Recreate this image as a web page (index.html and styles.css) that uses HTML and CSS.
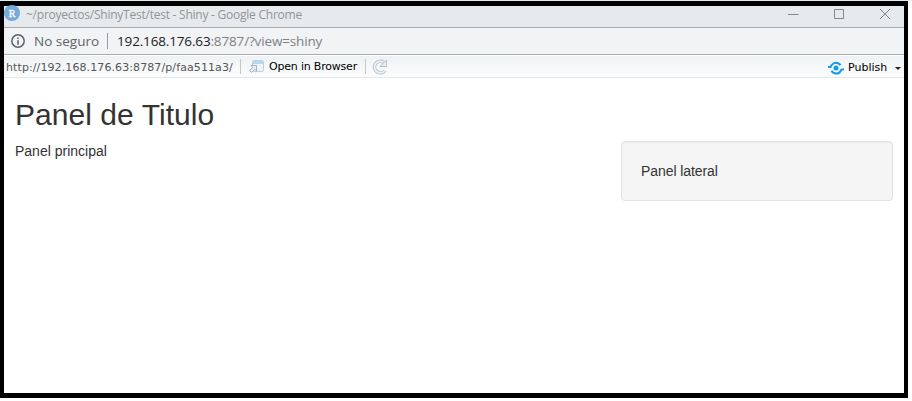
FILE: index.html
```html
<!DOCTYPE html>
<html lang="es">
<head>
<meta charset="utf-8">
<title>~/proyectos/ShinyTest/test - Shiny</title>
<link rel="stylesheet" href="styles.css">
</head>
<body>
<div class="window">
  <header class="titlebar">
    <svg class="app-icon" width="16" height="16" viewBox="0 0 16 16"><circle cx="8" cy="8" r="8" fill="#75aadb"/><text x="8" y="11.5" text-anchor="middle" class="app-letter">R</text></svg>
    <span class="title">~/proyectos/ShinyTest/test - Shiny - Google Chrome</span>
    <svg class="controls" width="103" height="12" viewBox="0 0 103 12" fill="none" stroke="#858789"><path d="M0 6.500H10.500M46.500 1.500H55.500V10.500H46.500ZM92 1L102 11M102 1L92 11"/></svg>
  </header>
  <div class="address">
    <svg class="info" width="14" height="14" viewBox="0 0 14 14"><circle cx="7" cy="7" r="6.200" fill="none" stroke="#5f6368" stroke-width="1.500"/><path d="M6.200 3.500h1.600v1.500H6.200zM6.200 6.200h1.600v4.500H6.200z" fill="#5f6368"/></svg>
    <span class="insecure">No seguro</span>
    <i class="address-sep"></i>
    <span class="location"><b>192.168.176.63</b>:8787/?view=shiny</span>
  </div>
  <div class="toolbar">
    <span class="path">http://192.168.176.63:8787/p/faa511a3/</span>
    <i class="sep"></i>
    <svg class="open-icon" width="16" height="13" viewBox="0 0 16 13"><rect x="3.500" y=".5" width="11" height="11" rx="1.500" fill="#edf5fa" stroke="#c3d0d9"/><path d="M4 1h10v3H4z" fill="#b5daf0"/><path d="M2 5.500H7.500V11L5.700 9.400 2.700 12.400 .5 10.500 3.700 7.500Z" fill="#e6edf2" stroke="#a5b3c0"/></svg>
    <span class="open">Open in Browser</span>
    <i class="sep sep-end"></i>
    <svg class="refresh" width="16" height="16" viewBox="0 0 16 16" fill="none"><path d="M11.500 3.200A5.800 5.800 0 1 0 13 11.500" stroke="#b5c1ce" stroke-width="3.500"/><path d="M11.500 3.200A5.800 5.800 0 1 0 13 11.500" stroke="#edf2f7" stroke-width="1.700"/><path d="M14.500 1V7.500H8Z" fill="#e8eef4" stroke="#b5c1ce"/></svg>
    <svg class="publish-icon" width="17" height="14" viewBox="0 0 17 14" fill="none" stroke="#139bea" stroke-width="2"><circle cx="8" cy="7" r="2.500" fill="#139bea" stroke="none"/><path d="M0 6H2.500C4 2.500 7 1 10 2.200 11.500 2.800 12 3.300 12.500 4.300M16 8.500H13.500C12 12 9 13.200 6 12 4.500 11.400 4 10.700 3.500 9.700"/></svg>
    <span class="publish">Publish</span>
    <i class="caret"></i>
  </div>
  <main class="page">
    <h1>Panel de Titulo</h1>
    <div class="row">
      <section class="main-panel">Panel principal</section>
      <aside class="well">Panel lateral</aside>
    </div>
  </main>
</div>
</body>
</html>
```
FILE: styles.css
```css
* { box-sizing: border-box; }
body { margin: 0; padding-top: 1px; height: 401px; overflow: hidden; background: linear-gradient(#e4eeee 1px, #fff 1px); }
.window { width: 908px; height: 397px; border: solid #000; border-width: 5px 4px; background: #fff; }
svg { flex: none; display: block; }
span { white-space: nowrap; flex: none; }
.titlebar { height: 22px; background: #e7eaed; border-bottom: 1px solid #aaacae; display: flex; align-items: center; padding-right: 13px; font: 12px "Open Sans", sans-serif; color: #929496; }
.app-icon { margin-top: -8px; }
.app-letter { font: 10px "Liberation Serif", serif; fill: #fff; stroke: #fff; stroke-width: .3px; }
.title { margin: -5px 0 0 6px; letter-spacing: -.24px; }
.controls { margin: -5px 0 0 auto; }
.address { height: 27px; background: #f1f3f4; border-bottom: 1px solid #aaacae; display: flex; align-items: center; font: 13.5px "Open Sans", sans-serif; color: #5f6368; }
.info { margin-left: 7px; }
.insecure { margin-left: 9px; width: 64px; }
.address-sep { width: 1px; height: 16px; background: #989b9e; margin: 0 9px; }
.location { color: #7d8185; letter-spacing: -.15px; }
.location b { font-weight: 400; color: #202124; }
.toolbar { height: 23px; border-top: 1px solid #fff; border-bottom: 1px solid #e4e6e7; background: linear-gradient(#eff2f4, #fcfdfd); display: flex; align-items: center; font: 11px "DejaVu Sans", sans-serif; color: #000; padding-left: 2px; }
.path { width: 227px; color: #555; letter-spacing: .1px; padding-top: 1px; }
.sep { width: 1px; height: 15px; background: #c5c9cc; margin: 0 8px 0 7px; }
.open { margin-left: 4px; width: 88px; letter-spacing: -.2px; }
.sep-end { margin-right: 6px; margin-left: 8px; }
.publish-icon { margin: 2px 0 0 auto; }
.publish { margin-left: 3px; width: 39px; padding-top: 1px; }
.caret { border: 3px solid transparent; border-top-color: #222; border-bottom: 0; margin: 4px 3px 0 8px; }
.page { padding: 20px 11px 0; font: 14px/20px "Liberation Sans", Arial, sans-serif; color: #333; }
h1 { font-size: 30px; line-height: 33px; font-weight: 400; margin: 0 0 10px; letter-spacing: .05px; }
.row { display: flex; justify-content: space-between; }
.well { width: 272px; height: 60px; padding: 19px; background: #f5f5f5; border: 1px solid #e3e3e3; border-radius: 4px; box-shadow: inset 0 1px 1px rgba(0,0,0,.05); letter-spacing: -.08px; }
```
